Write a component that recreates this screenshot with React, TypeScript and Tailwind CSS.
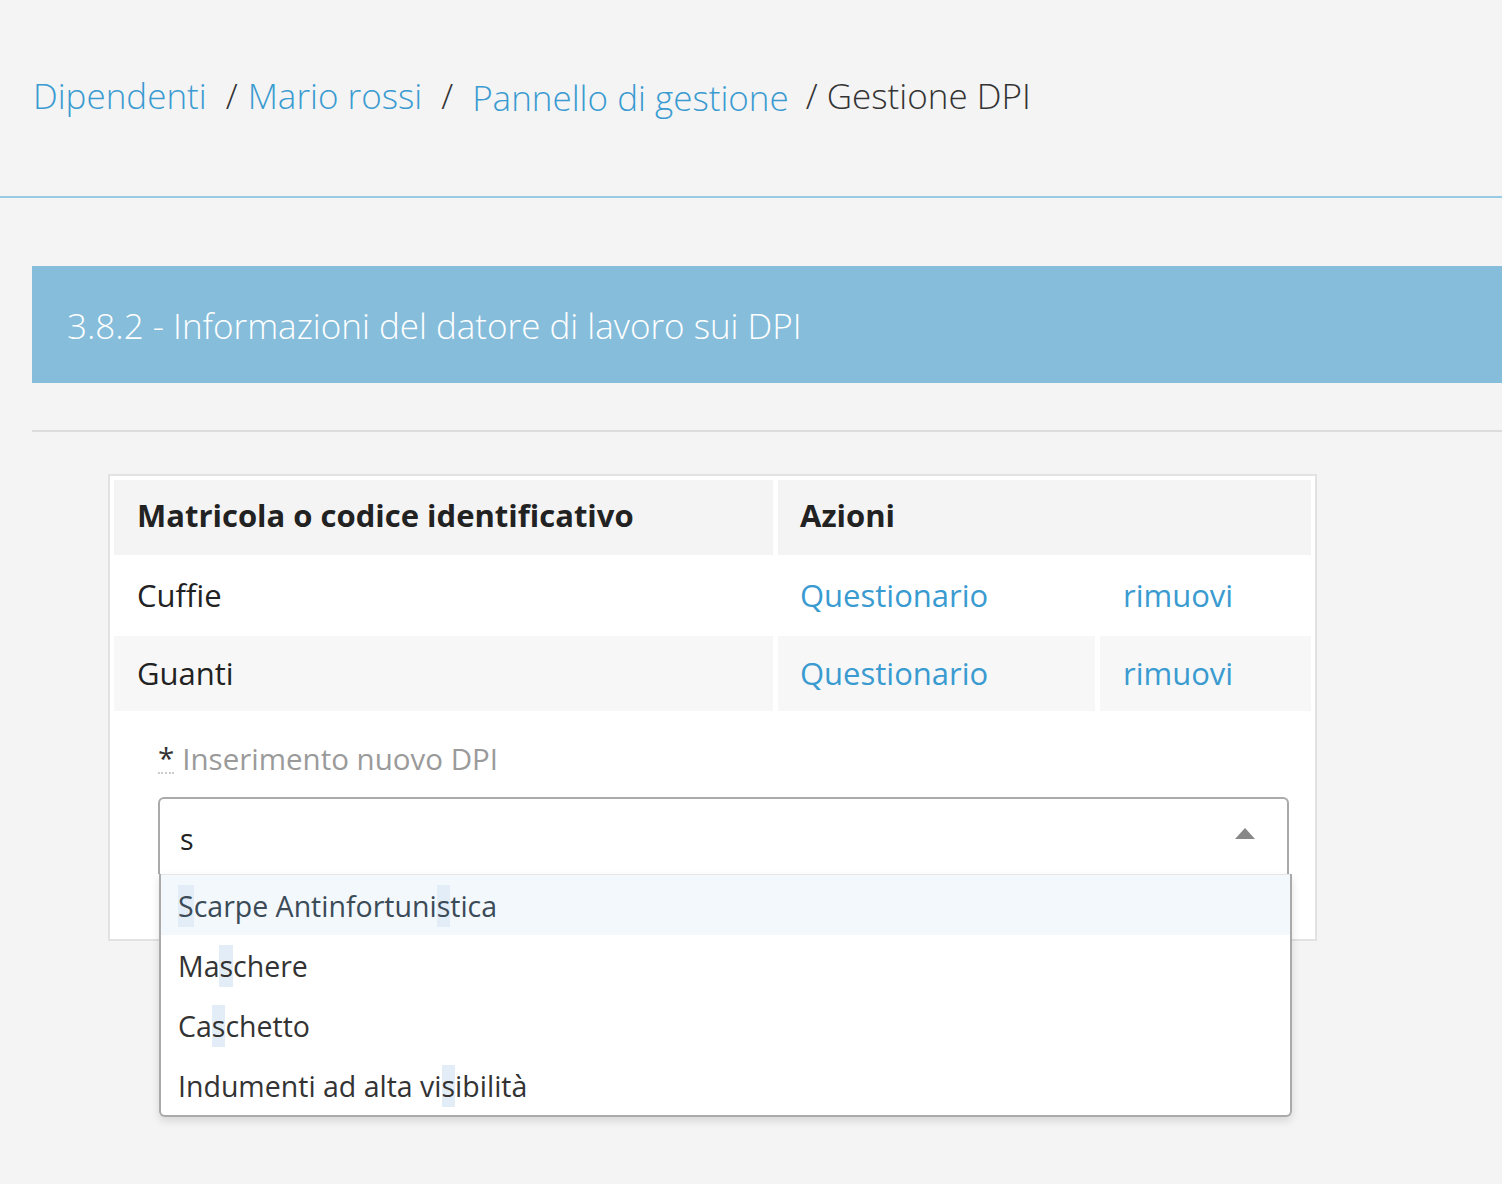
import { Fragment } from 'react';

const rows = [
  { name: 'Cuffie', striped: false },
  { name: 'Guanti', striped: true },
];

const options = [
  { parts: [['S', true], ['carpe Antinfortuni', false], ['s', true], ['tica', false]], active: true },
  { parts: [['Ma', false], ['s', true], ['chere', false]], active: false },
  { parts: [['Ca', false], ['s', true], ['chetto', false]], active: false },
  { parts: [['Indumenti ad alta vi', false], ['s', true], ['ibilità', false]], active: false },
] as const;

export default function App() {
  return (
    <div className="min-h-[1184px] bg-[#f4f4f4] font-['Open_Sans',sans-serif] overflow-hidden">
      <header className="h-[198px] flex items-center px-[33px] pb-[4px] border-b-2 border-[#97cbe3] text-[35px] font-light text-[#3a9bd1] whitespace-nowrap">
        <a className="mr-[19px]">Dipendenti</a>
        <span className="text-[#333] mr-[10px]">/</span>
        <a className="mr-[19px]">Mario rossi</a>
        <span className="text-[#333] mr-[19px]">/</span>
        <a className="mr-[17px] mt-[4px]">Pannello di gestione</a>
        <span className="text-[#333]">/ Gestione DPI</span>
      </header>

      <main className="pl-[32px] pt-[68px]">
        <div className="h-[117px] bg-[#85bddb] flex items-center px-[35px] pt-[4px] text-white text-[35px] font-light whitespace-nowrap">
          3.8.2 - Informazioni del datore di lavoro sui DPI
        </div>
        <div className="mt-[47px] h-[2px] bg-[#dcdcdc]" />

        <section className="mt-[42px] ml-[76px] w-[1209px] h-[467px] bg-white border-2 border-[#e2e2e2] p-[4px]">
          <div className="grid grid-cols-[659px_317px_211px] gap-x-[5px] gap-y-[3px] text-[31px] text-[#222]">
            <div className="h-[75px] bg-[#f4f4f4] flex items-center pl-[23px] pb-[4px] font-bold">Matricola o codice identificativo</div>
            <div className="col-span-2 h-[75px] bg-[#f4f4f4] flex items-center pl-[22px] pb-[4px] font-bold">Azioni</div>
            {rows.map((r) => (
              <Fragment key={r.name}>
                <div className={`h-[75px] flex items-center pl-[23px] ${r.striped ? 'bg-[#f7f7f7]' : 'bg-white'}`}>{r.name}</div>
                <div className={`h-[75px] flex items-center pl-[22px] text-[#3a9bd1] ${r.striped ? 'bg-[#f7f7f7]' : 'bg-white'}`}>Questionario</div>
                <div className={`h-[75px] flex items-center pl-[23px] text-[#3a9bd1] ${r.striped ? 'bg-[#f7f7f7]' : 'bg-white'}`}>rimuovi</div>
              </Fragment>
            ))}
          </div>

          <div className="pl-[44px] pr-[22px] pt-[28px]">
            <label className="flex items-center text-[29.5px] leading-[40px] text-[#9a9a9a]">
              <abbr className="text-[#333] no-underline border-b-2 border-dotted border-[#ccc] leading-[28px] mr-[8px]">*</abbr>
              Inserimento nuovo DPI
            </label>
            <div className="relative mt-[18px]">
              <div className="h-[77px] border-2 border-b-0 border-[#aaa] rounded-t-[6px] flex items-center justify-between pl-[20px] pr-[32px] pt-[6px] text-[28.5px] text-[#222]">
                <span>s</span>
                <svg width="20" height="11" viewBox="0 0 20 11" className="mb-[12px]">
                  <path d="M0 11 L10 0 L20 11 Z" fill="#888" />
                </svg>
              </div>
              <ul className="absolute left-[1px] top-[77px] w-[1133px] bg-white border-2 border-t-0 border-[#aaa] rounded-b-[6px] shadow-[0_4px_8px_rgba(0,0,0,0.12)]">
                <div className="h-[1px] bg-[#e6e6e6]" />
                {options.map((o, i) => (
                  <li
                    key={i}
                    className={`h-[60px] flex items-center pl-[17px] pt-[2px] text-[28.5px] ${o.active ? 'bg-[#f3f8fc] text-[#3b4b58]' : 'text-[#333]'}`}
                  >
                    {o.parts.map(([t, hl], j) => (
                      <span key={j} className={hl ? 'bg-[#e3edf7]' : ''}>{t}</span>
                    ))}
                  </li>
                ))}
              </ul>
            </div>
          </div>
        </section>
      </main>
    </div>
  );
}
